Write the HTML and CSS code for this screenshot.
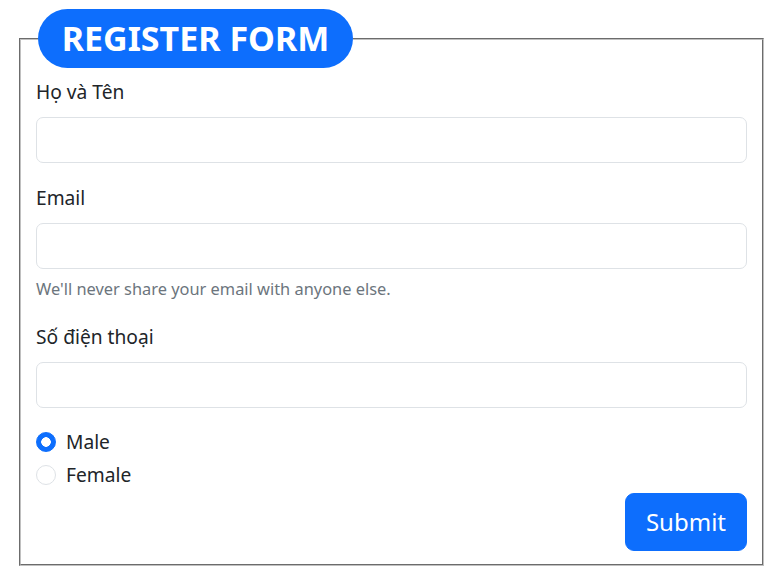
FILE: index.html
```html
<!DOCTYPE html>
<html lang="vi">
<head>
<meta charset="utf-8">
<title>Register Form</title>
<link rel="stylesheet" href="styles.css">
</head>
<body>
<form class="form">
  <fieldset class="box">
    <legend class="title"><span class="title-text">REGISTER FORM</span></legend>
    <div class="group">
      <label class="label" for="name">Họ và Tên</label>
      <input class="input" id="name" type="text">
    </div>
    <div class="group">
      <label class="label" for="email">Email</label>
      <input class="input" id="email" type="email">
      <div class="help">We'll never share your email with anyone else.</div>
    </div>
    <div class="group">
      <label class="label" for="phone">Số điện thoại</label>
      <input class="input" id="phone" type="tel">
    </div>
    <div class="radios">
      <label class="check"><input class="radio" type="radio" name="gender" checked> <span>Male</span></label>
      <label class="check"><input class="radio" type="radio" name="gender"> <span>Female</span></label>
    </div>
    <div class="actions">
      <button class="btn" type="submit">Submit</button>
    </div>
  </fieldset>
</form>
</body>
</html>
```
FILE: styles.css
```css
* { box-sizing: border-box; }
html, body { margin: 0; padding: 0; background: #fff; }
body {
  font-family: "Noto Sans", "Open Sans", sans-serif;
  font-size: 19.2px;
  line-height: 1.5;
  color: #212529;
}
.form { margin: 0; padding: 9px 18px 0 19px; }
.box {
  margin: 0;
  padding: 9px 15px 13px 15px;
  border: 2px groove #c0c0c0;
  min-width: 0;
}
.title {
  margin-left: 2px;
  padding: 8px 0;
  width: 315px;
  text-align: left;
  background: #0d6efd;
  color: #fff;
  border-radius: 30px;
  font-size: 34px;
  font-weight: 700;
  line-height: 43px;
}
.title-text { display: block; text-align: center; }
.group { margin-bottom: 20px; }
.label { display: block; margin-bottom: 10px; line-height: 30px; }
.input {
  display: block;
  width: 100%;
  height: 46px;
  padding: 7px 15px;
  font: inherit;
  border: 1px solid #dee2e6;
  border-radius: 7px;
  background: #fff;
}
.help { margin-top: 7px; font-size: 16.4px; line-height: 26px; color: #6c757d; }
.radios { display: flex; flex-direction: column; gap: 3px; margin-top: -1px; }
.check { display: flex; align-items: center; gap: 10px; height: 30px; }
.radio {
  appearance: none;
  -webkit-appearance: none;
  margin: 0;
  width: 20px;
  height: 20px;
  border: 1px solid #dee2e6;
  border-radius: 50%;
  background: #fff;
}
.radio:checked {
  border-color: #0d6efd;
  background: radial-gradient(circle, #fff 0 4.5px, #0d6efd 5px);
}
.actions { display: flex; justify-content: flex-end; margin-top: 3px; }
.btn {
  height: 58px;
  padding: 0 20px;
  font: inherit;
  font-size: 24px;
  color: #fff;
  background: #0d6efd;
  border: 1px solid #0d6efd;
  border-radius: 9px;
}
```
